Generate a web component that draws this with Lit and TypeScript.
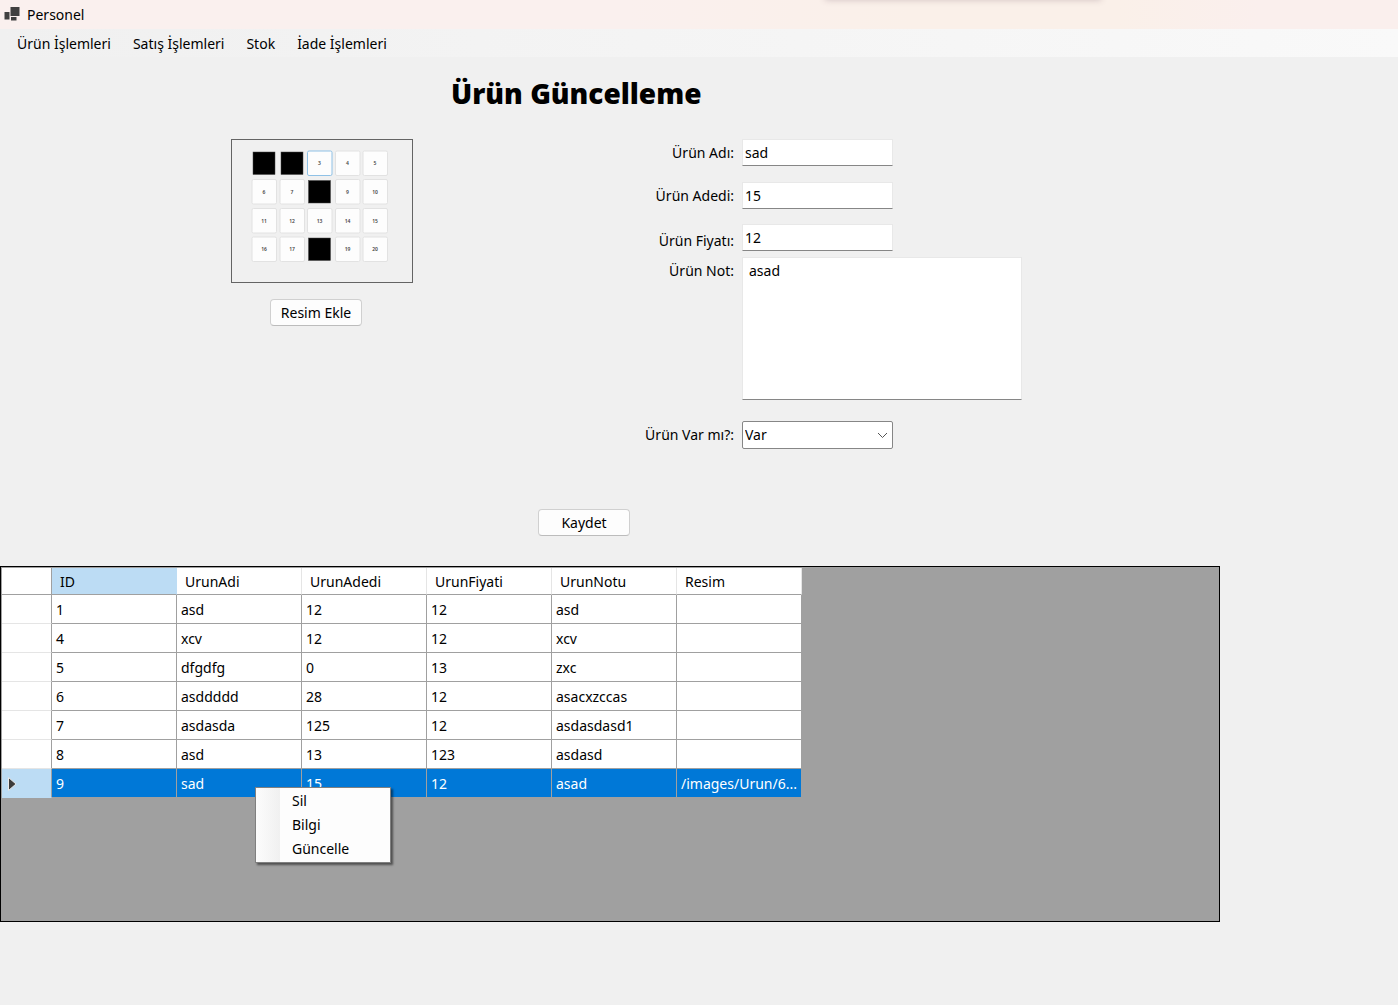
import { LitElement, html, svg, css } from "lit";
import { customElement, state } from "lit/decorators.js";
import { classMap } from "lit/directives/class-map.js";

const MENUS = ["Ürün İşlemleri", "Satış İşlemleri", "Stok", "İade İşlemleri"];
const COLUMNS = ["ID", "UrunAdi", "UrunAdedi", "UrunFiyati", "UrunNotu", "Resim"];
const ROWS = [
  ["1", "asd", "12", "12", "asd", ""],
  ["4", "xcv", "12", "12", "xcv", ""],
  ["5", "dfgdfg", "0", "13", "zxc", ""],
  ["6", "asddddd", "28", "12", "asacxzccas", ""],
  ["7", "asdasda", "125", "12", "asdasdasd1", ""],
  ["8", "asd", "13", "123", "asdasd", ""],
  ["9", "sad", "15", "12", "asad", "/images/Urun/6..."],
];
const ACTIONS = ["Sil", "Bilgi", "Güncelle"];

/* Thumbnail of the product picture: a 5 x 4 board of numbered tiles. */
const TILE_X = [32, 60, 87.5, 115.5, 143];
const TILE_Y = [23, 51.5, 80.5, 109];
const FILLED = [1, 2, 8, 18];
const FOCUSED = 3;

@customElement("product-thumbnail")
class ProductThumbnail extends LitElement {
  static styles = css`
    :host {
      display: block;
      border: 1px solid #646464;
    }
    .board {
      display: block;
      width: 180px;
      height: 142px;
    }
    .number {
      font: 600 5px "Noto Sans", sans-serif;
      fill: #444;
      text-anchor: middle;
    }
  `;

  private tile(n: number) {
    const x = TILE_X[(n - 1) % 5];
    const y = TILE_Y[Math.floor((n - 1) / 5)];
    if (FILLED.includes(n)) {
      return svg`<rect x=${x - 11} y=${y - 11} width="22" height="22.5" fill="#000" stroke="#444" stroke-width="0.5" />`;
    }
    return svg`
      <rect x=${x - 12} y=${y - 12} width="24.5" height="24.5" rx="1.5" fill="#fdfdfd"
        stroke=${n === FOCUSED ? "#8fc1e6" : "#e2e2e2"} />
      <text class="number" x=${x} y=${y + 2}>${n}</text>`;
  }

  render() {
    return html`<svg class="board" viewBox="0 0 180 142" role="img">
      ${Array.from({ length: 20 }, (_, i) => this.tile(i + 1))}
    </svg>`;
  }
}

@customElement("app-root")
class AppRoot extends LitElement {
  @state() private selected = 6;

  static styles = css`
    :host {
      display: block;
      min-height: 100vh;
      background: #f0f0f0;
      color: #000;
      font: 14px/20px "Noto Sans", "Open Sans", sans-serif;
    }
    * {
      box-sizing: border-box;
    }
    button,
    input,
    select,
    textarea {
      font: inherit;
      color: inherit;
      margin: 0;
      border-radius: 0;
      outline: none;
    }
    .titlebar {
      position: relative;
      overflow: hidden;
      display: flex;
      align-items: center;
      gap: 7px;
      height: 29px;
      padding-left: 4px;
      background: linear-gradient(90deg, #faf0ee 0 45%, #faf0e9 65% 80%, #faefed 90%);
    }
    .titlebar::after {
      content: "";
      position: absolute;
      top: -10px;
      left: 59%;
      width: 276px;
      height: 10px;
      box-shadow: 0 0 6px rgba(90, 60, 80, 0.25);
    }
    .app-icon {
      display: block;
      width: 16px;
      height: 16px;
    }
    .menubar {
      display: flex;
      height: 28px;
      padding: 2px 0 0 11px;
      gap: 10px;
      background: linear-gradient(90deg, #f0f0f0, #f7f7f7 80%, #f9f9f9);
    }
    .menu {
      padding: 0 6px;
      border: 0;
      background: none;
    }
    .title {
      margin: 16px 0 26px 451px;
      font: 900 28px/40px "Noto Sans", "Open Sans", sans-serif;
      white-space: nowrap;
    }
    .editor {
      display: flex;
      align-items: flex-start;
      padding-left: 231px;
    }
    .picture {
      display: flex;
      flex-direction: column;
      align-items: flex-start;
      gap: 16px;
      padding-right: 207px;
    }
    .push {
      width: 92px;
      height: 27px;
      padding: 0;
      border: 1px solid #d0d0d0;
      border-bottom-color: #bcbcbc;
      border-radius: 4px;
      background: #fdfdfd;
      white-space: nowrap;
    }
    .push.browse {
      margin-left: 39px;
    }
    .fields {
      flex: 1;
    }
    .field {
      display: grid;
      grid-template-columns: 114px minmax(0, 1fr);
      column-gap: 8px;
      align-items: center;
      margin-bottom: 16px;
    }
    .field.close {
      align-items: end;
      margin: -1px 0 6px;
    }
    .field.note {
      align-items: start;
      margin-bottom: 21px;
    }
    .field.note .label {
      line-height: 27px;
    }
    .label {
      text-align: right;
      white-space: nowrap;
    }
    .box {
      width: 151px;
      height: 27px;
      padding: 0 2px;
      border: 1px solid #e8e8e8;
      border-bottom-color: #868686;
      background: #fff;
    }
    .area {
      display: block;
      width: 280px;
      height: 143px;
      padding: 3px 6px;
      resize: none;
    }
    .select-wrap {
      position: relative;
      width: 151px;
    }
    .select {
      display: block;
      width: 100%;
      height: 28px;
      padding: 0 2px;
      appearance: none;
      border: 1px solid #868686;
      border-radius: 2px;
      background: #fff;
    }
    .chevron {
      position: absolute;
      right: 5px;
      top: 11px;
      width: 11px;
      height: 7px;
      pointer-events: none;
    }
    .save {
      display: block;
      margin: 44px 0 30px 538px;
    }
    .data {
      position: relative;
      margin-right: 178px;
      min-height: 356px;
      border: 1px solid #000;
      background: #a0a0a0;
    }
    .table {
      table-layout: fixed;
      width: 801px;
      border-collapse: separate;
      border-spacing: 0;
      border: 1px solid #a0a0a0;
      border-width: 1px 0 0 1px;
    }
    .stub {
      width: 50px;
    }
    .head,
    .cell,
    .marker {
      padding: 2px 4px 0;
      border: 1px solid #a0a0a0;
      border-width: 0 1px 1px 0;
      background: #fff;
      text-align: left;
      font-weight: 400;
      white-space: nowrap;
      overflow: hidden;
    }
    .head {
      height: 27px;
      padding-left: 8px;
      border-right-color: #e5e5e5;
    }
    .head.corner {
      border-right-color: #a0a0a0;
    }
    .head.active {
      background: #bcdcf4;
      border-right-color: #bcdcf4;
    }
    .cell {
      height: 29px;
    }
    .marker {
      border-bottom-color: #e5e5e5;
    }
    .picked .cell {
      background: #0078d7;
      color: #fff;
    }
    .picked .marker {
      background: #bcdcf4;
      border-color: #a0a0a0;
      border-bottom-color: #bcdcf4;
    }
    .arrow {
      display: block;
      width: 10px;
      height: 14px;
      margin-left: 1px;
    }
    .context {
      position: absolute;
      left: 254px;
      top: 220px;
      width: 136px;
      padding: 1px;
      border: 1px solid #808080;
      background: linear-gradient(90deg, #fcfcfc, #f0f0f0 24px, #fdfdfd 24px);
      box-shadow: 2px 2px 2px rgba(0, 0, 0, 0.5);
    }
    .action {
      display: block;
      width: 100%;
      height: 24px;
      padding: 0 0 0 35px;
      border: 0;
      background: none;
      text-align: left;
    }
  `;

  private textField(id: string, label: string, value: string, close = false) {
    return html`<div class=${classMap({ field: true, close })}>
      <label class="label" for=${id}>${label}</label>
      <input class="box" id=${id} .value=${value} />
    </div>`;
  }

  private row(cells: string[], index: number) {
    const picked = index === this.selected;
    return html`<tr class=${classMap({ picked })} @click=${() => (this.selected = index)}>
      <td class="marker">
        ${picked
          ? html`<svg class="arrow" viewBox="0 0 10 14">
              <path d="M1.5 0.5 L9 7 L1.5 13.5 Z" fill="#3b3b3b" stroke="#e8e8e8" />
            </svg>`
          : ""}
      </td>
      ${cells.map((text) => html`<td class="cell">${text}</td>`)}
    </tr>`;
  }

  render() {
    return html`
      <header class="titlebar">
        <svg class="app-icon" viewBox="0 0 16 16">
          <rect x="6.5" y="0" width="9" height="9" fill="#404040" />
          <rect x="0.5" y="5" width="5" height="7.5" fill="#404040" />
          <rect x="7" y="10" width="5.5" height="3.5" fill="#404040" />
        </svg>
        <span>Personel</span>
      </header>
      <nav class="menubar">
        ${MENUS.map((name) => html`<button class="menu">${name}</button>`)}
      </nav>
      <main>
        <h1 class="title">Ürün Güncelleme</h1>
        <section class="editor">
          <div class="picture">
            <product-thumbnail></product-thumbnail>
            <button class="push browse">Resim Ekle</button>
          </div>
          <div class="fields">
            ${this.textField("name", "Ürün Adı:", "sad")}
            ${this.textField("count", "Ürün Adedi:", "15")}
            ${this.textField("price", "Ürün Fiyatı:", "12", true)}
            <div class="field note">
              <label class="label" for="note">Ürün Not:</label>
              <textarea class="box area" id="note" .value=${"asad"}></textarea>
            </div>
            <div class="field">
              <label class="label" for="stock">Ürün Var mı?:</label>
              <div class="select-wrap">
                <select class="select" id="stock">
                  <option>Var</option>
                </select>
                <svg class="chevron" viewBox="0 0 11 7">
                  <path d="M1 1 L5.5 5.5 L10 1" fill="none" stroke="#555" />
                </svg>
              </div>
            </div>
          </div>
        </section>
        <button class="push save">Kaydet</button>
        <section class="data">
          <table class="table">
            <thead>
              <tr>
                <th class="head corner stub"></th>
                ${COLUMNS.map(
                  (name, i) => html`<th class=${classMap({ head: true, active: i === 0 })}>${name}</th>`,
                )}
              </tr>
            </thead>
            <tbody>
              ${ROWS.map((cells, i) => this.row(cells, i))}
            </tbody>
          </table>
          <div class="context">
            ${ACTIONS.map((name) => html`<button class="action">${name}</button>`)}
          </div>
        </section>
      </main>
    `;
  }
}
